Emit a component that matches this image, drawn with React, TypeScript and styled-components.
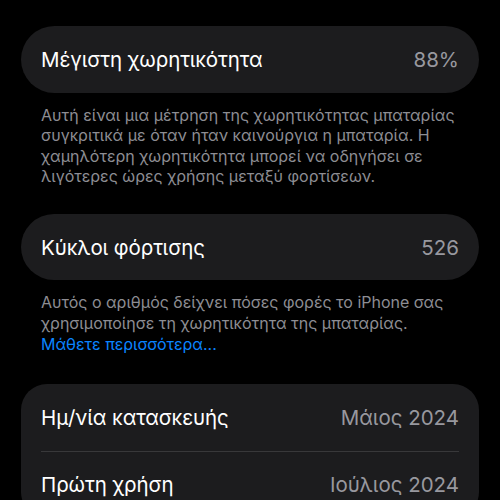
import React from 'react';
import styled, { createGlobalStyle } from 'styled-components';

const GlobalStyle = createGlobalStyle`
  html, body {
    margin: 0;
    padding: 0;
    background: #000;
  }
  body {
    font-family: Inter, "Noto Sans", "Liberation Sans", sans-serif;
    -webkit-font-smoothing: antialiased;
  }
`;

const Page = styled.main`
  display: flex;
  flex-direction: column;
  padding: 26px 21px 0;
  height: 500px;
  box-sizing: border-box;
  overflow: hidden;
`;

const Card = styled.section<{ $pill?: boolean }>`
  flex-shrink: 0;
  background: #1c1c1e;
  border-radius: ${(p) => (p.$pill ? '34px' : '26px')};
  padding: 0 20px;
`;

const Row = styled.div<{ $divider?: boolean }>`
  display: flex;
  align-items: center;
  justify-content: space-between;
  height: 66.5px;
  border-bottom: ${(p) => (p.$divider ? '1px solid #38383a' : 'none')};
`;

const Label = styled.span`
  color: #fff;
  font-size: 20.5px;
  letter-spacing: -0.1px;
`;

const Value = styled.span`
  color: #98989f;
  font-size: 20.5px;
`;

const Footnote = styled.p<{ $bottom: number }>`
  flex-shrink: 0;
  margin: 0;
  padding: 12px 20px 0;
  margin-bottom: ${(p) => p.$bottom}px;
  color: #8d8d93;
  font-size: 16px;
  line-height: 20.6px;
`;

const Link = styled.a`
  color: #0a84ff;
  text-decoration: none;
`;

const App: React.FC = () => {
  return (
    <>
      <GlobalStyle />
      <Page>
        <Card $pill>
          <Row>
            <Label>Μέγιστη χωρητικότητα</Label>
            <Value>88%</Value>
          </Row>
        </Card>
        <Footnote $bottom={27}>
          Αυτή είναι μια μέτρηση της χωρητικότητας μπαταρίας
          <br />
          συγκριτικά με όταν ήταν καινούργια η μπαταρία. Η
          <br />
          χαμηλότερη χωρητικότητα μπορεί να οδηγήσει σε
          <br />
          λιγότερες ώρες χρήσης μεταξύ φορτίσεων.
        </Footnote>

        <Card $pill>
          <Row>
            <Label>Κύκλοι φόρτισης</Label>
            <Value>526</Value>
          </Row>
        </Card>
        <Footnote $bottom={30}>
          Αυτός ο αριθμός δείχνει πόσες φορές το iPhone σας
          <br />
          χρησιμοποίησε τη χωρητικότητα της μπαταρίας.
          <br />
          <Link href="#">Μάθετε περισσότερα...</Link>
        </Footnote>

        <Card>
          <Row $divider>
            <Label>Ημ/νία κατασκευής</Label>
            <Value>Μάιος 2024</Value>
          </Row>
          <Row>
            <Label>Πρώτη χρήση</Label>
            <Value>Ιούλιος 2024</Value>
          </Row>
        </Card>
      </Page>
    </>
  );
};

export default App;
